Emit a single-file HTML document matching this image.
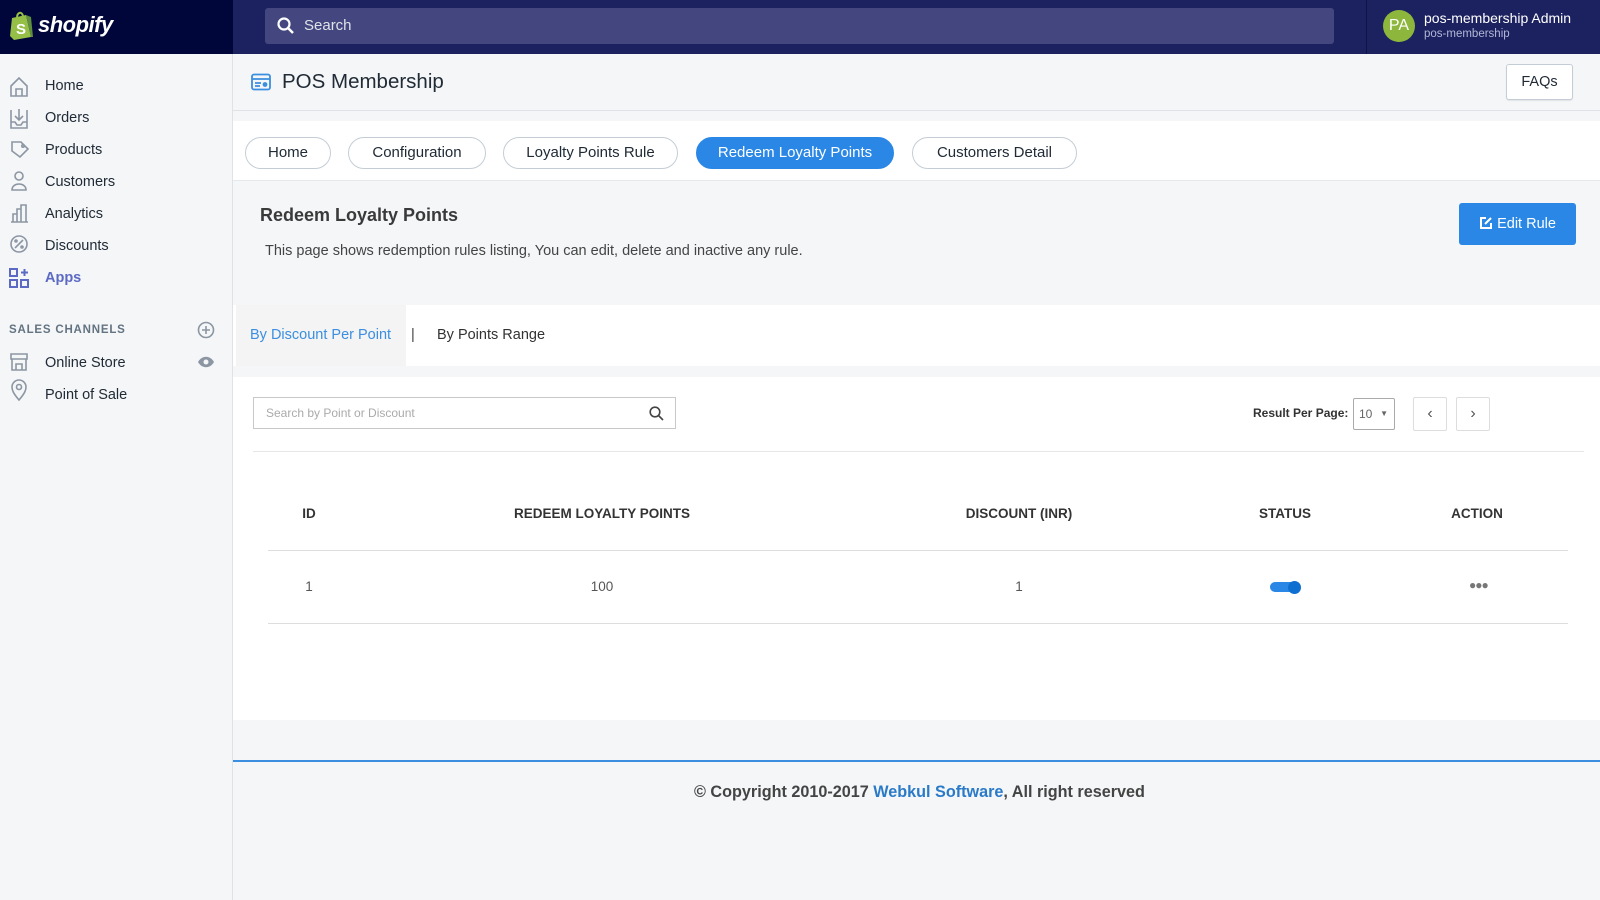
<!DOCTYPE html>
<html><head><meta charset="utf-8"><style>
*{box-sizing:border-box;margin:0;padding:0}
body{width:1600px;height:900px;overflow:hidden;background:#f4f6f8;font-family:"Liberation Sans",sans-serif;color:#212b36;position:relative}
.abs{position:absolute}
.top{left:0;top:0;width:1600px;height:54px;background:#1c2260}
.logo{left:0;top:0;width:233px;height:54px;background:#000639}
.search{left:265px;top:8px;width:1069px;height:36px;background:#43467f;border-radius:3px;color:#dfe3e8;font-size:15px;line-height:36px;padding-left:39px}
.side{left:0;top:54px;width:233px;height:846px;background:#f4f6f8;border-right:1px solid #dfe3e8}
.nav{left:45px;font-size:14.5px;color:#212b36}
.pill{top:137px;height:32px;border:1.5px solid #c4cdd5;border-radius:16px;font-size:15px;line-height:29px;text-align:center;color:#212b36;background:#fff}
.col{font-size:13.5px;font-weight:bold;color:#333;transform:translateX(-50%);white-space:nowrap}
.cell{font-size:13.5px;color:#555;transform:translateX(-50%)}
</style></head><body>
<div class="abs top"></div>
<div class="abs logo">
<svg class="abs" style="left:9px;top:10px" width="26" height="30" viewBox="0 0 26 30"><path d="M3 8 L17 5 L22 27 L5 30 L1 26 Z" fill="#95bf47"/><path d="M17 5 L22 7 L24 27 L22 27Z" fill="#5e8e3e"/><path d="M8 8 C8 2 13 1 14 6" stroke="#95bf47" stroke-width="2" fill="none"/><text x="7" y="24" fill="#fff" font-size="15" font-weight="bold" font-family="Liberation Sans">S</text></svg>
<div class="abs" style="left:38px;top:12px;color:#fff;font-size:22px;font-weight:bold;font-style:italic;letter-spacing:-0.5px">shopify</div>
</div>
<div class="abs search">Search</div>
<svg class="abs" style="left:277px;top:17px" width="18" height="18" viewBox="0 0 18 18"><circle cx="7" cy="7" r="5.5" stroke="#fff" stroke-width="2.2" fill="none"/><path d="M11 11 L16 16" stroke="#fff" stroke-width="2.5"/></svg>
<div class="abs" style="left:1366px;top:0;width:1px;height:54px;background:#0f1440"></div>
<div class="abs" style="left:1383px;top:10px;width:32px;height:32px;border-radius:50%;background:#8db63d;color:#fff;font-size:16px;line-height:32px;text-align:center">PA</div>
<div class="abs" style="left:1424px;top:10px;color:#fff;font-size:14px">pos-membership Admin</div>
<div class="abs" style="left:1424px;top:28px;color:#b3b8d6;font-size:11.5px">pos-membership</div>

<div class="abs side"></div>
<svg class="abs" style="left:9px;top:76px" width="22" height="330" viewBox="0 0 22 330" fill="none" stroke="#8c96a3" stroke-width="1.6">
<path d="M2 10 L10 2 L18 10 V20 H2 Z M7 20 V13 H13 V20"/>
<path d="M2 34 V52 H18 V34 M10 33 V44 M6 40 L10 44 L14 40 M2 46 H6 L8 49 H12 L14 46 H18"/>
<path d="M3 75 L3 66 L12 66 L19 73 L11 81 Z"/><circle cx="14" cy="70" r="1.2"/>
<circle cx="10" cy="100" r="4"/><path d="M3 114 C3 106 17 106 17 114 Z"/>
<path d="M2 146 H19 M4 146 V138 H8 V146 M8 146 V133 H12 V146 M12 146 V129 H17 V146"/>
<circle cx="10" cy="168" r="8"/><path d="M6 172 L14 164"/><circle cx="7" cy="165" r="1"/><circle cx="13" cy="171" r="1"/>
</svg>
<svg class="abs" style="left:9px;top:268px" width="22" height="22" viewBox="0 0 22 22" fill="none" stroke="#5c6ac4" stroke-width="2"><rect x="1" y="1" width="7" height="7"/><rect x="1" y="12" width="7" height="7"/><rect x="12" y="12" width="7" height="7"/><path d="M15.5 1 V8 M12 4.5 H19"/></svg>
<div class="abs nav" style="top:78px">Home</div>
<div class="abs nav" style="top:110px">Orders</div>
<div class="abs nav" style="top:142px">Products</div>
<div class="abs nav" style="top:174px">Customers</div>
<div class="abs nav" style="top:206px">Analytics</div>
<div class="abs nav" style="top:238px">Discounts</div>
<div class="abs nav" style="top:270px;color:#5c6ac4;font-weight:bold">Apps</div>
<div class="abs" style="left:9px;top:324px;font-size:11.5px;font-weight:bold;color:#637381;letter-spacing:0.8px">SALES CHANNELS</div>
<svg class="abs" style="left:197px;top:321px" width="18" height="18" viewBox="0 0 18 18" fill="none" stroke="#8c96a3" stroke-width="1.6"><circle cx="9" cy="9" r="7.5"/><path d="M9 5 V13 M5 9 H13"/></svg>
<svg class="abs" style="left:197px;top:355px" width="18" height="14" viewBox="0 0 18 14"><path d="M1 7 C5 0 13 0 17 7 C13 14 5 14 1 7Z" fill="#8c96a3"/><circle cx="9" cy="7" r="2.5" fill="#f4f6f8"/></svg>
<svg class="abs" style="left:9px;top:352px" width="22" height="50" viewBox="0 0 22 50" fill="none" stroke="#8c96a3" stroke-width="1.6"><path d="M2 2 H18 V7 H2 Z M3 7 V18 H17 V7 M7 18 V12 H13 V18"/><path d="M10 48 C4 41 3 38 3 35 A7 7 0 0 1 17 35 C17 38 16 41 10 48Z"/><circle cx="10" cy="35" r="2.5"/></svg>
<div class="abs nav" style="top:355px">Online Store</div>
<div class="abs nav" style="top:387px">Point of Sale</div>

<svg class="abs" style="left:251px;top:73px" width="20" height="18" viewBox="0 0 20 18" fill="none" stroke="#3b8ee0" stroke-width="1.8"><rect x="1" y="1.5" width="18" height="15" rx="2"/><path d="M1 6 H19 M4 10 H10 M4 13 H9" /><circle cx="14" cy="11.5" r="1.5" fill="#3b8ee0"/></svg>
<div class="abs" style="left:282px;top:70px;font-size:20.5px;color:#212b36">POS Membership</div>
<div class="abs" style="left:1506px;top:64px;width:67px;height:36px;background:#fff;border:1px solid #c4cdd5;border-radius:3px;font-size:14.5px;line-height:34px;text-align:center;box-shadow:0 1px 1px rgba(0,0,0,.08)">FAQs</div>
<div class="abs" style="left:233px;top:110px;width:1367px;height:1px;background:#dfe3e8"></div>

<div class="abs" style="left:233px;top:121px;width:1367px;height:60px;background:#fff;border-bottom:1px solid #e6e9ec"></div>
<div class="abs pill" style="left:245px;width:86px">Home</div>
<div class="abs pill" style="left:348px;width:138px">Configuration</div>
<div class="abs pill" style="left:503px;width:175px">Loyalty Points Rule</div>
<div class="abs pill" style="left:696px;width:198px;background:#2a87e6;border-color:#2a87e6;color:#fff">Redeem Loyalty Points</div>
<div class="abs pill" style="left:912px;width:165px">Customers Detail</div>

<div class="abs" style="left:260px;top:205px;font-size:18px;font-weight:bold;color:#3a3a3a">Redeem Loyalty Points</div>
<div class="abs" style="left:265px;top:243px;font-size:14.5px;color:#444">This page shows redemption rules listing, You can edit, delete and inactive any rule.</div>
<div class="abs" style="left:1459px;top:203px;width:117px;height:42px;background:#2a87e6;border-radius:3px;color:#fff;font-size:14.5px;line-height:42px;text-align:center">
<svg style="vertical-align:-2px" width="14" height="14" viewBox="0 0 14 14" fill="none" stroke="#fff" stroke-width="2"><path d="M7 2 H2 V12 H12 V7"/><path d="M6 8 L12 2"/></svg> Edit Rule</div>

<div class="abs" style="left:233px;top:305px;width:1367px;height:61px;background:#fff"></div>
<div class="abs" style="left:236px;top:305px;width:170px;height:61px;background:#f4f4f4"></div>
<div class="abs" style="left:250px;top:327px;font-size:14.5px;color:#3b8ee0">By Discount Per Point</div>
<div class="abs" style="left:411px;top:327px;font-size:14.5px;color:#444">|</div>
<div class="abs" style="left:437px;top:327px;font-size:14.5px;color:#333">By Points Range</div>

<div class="abs" style="left:233px;top:377px;width:1367px;height:343px;background:#fff"></div>
<div class="abs" style="left:253px;top:397px;width:423px;height:32px;border:1px solid #c8c8c8;font-size:12px;color:#aaa;line-height:30px;padding-left:12px">Search by Point or Discount</div>
<svg class="abs" style="left:649px;top:406px" width="15" height="15" viewBox="0 0 15 15" fill="none" stroke="#444" stroke-width="1.6"><circle cx="6" cy="6" r="4.8"/><path d="M9.5 9.5 L14 14"/></svg>
<div class="abs" style="left:1253px;top:406px;font-size:12px;font-weight:bold;color:#333">Result Per Page:</div>
<div class="abs" style="left:1353px;top:398px;width:42px;height:32px;border:1px solid #aaa;border-radius:2px;font-size:12px;color:#666;line-height:30px;padding-left:5px">10<span style="position:absolute;right:6px;font-size:8px">▼</span></div>
<div class="abs" style="left:1413px;top:397px;width:34px;height:34px;border:1px solid #ddd;border-radius:2px;color:#555;font-size:16px;line-height:32px;text-align:center">‹</div>
<div class="abs" style="left:1456px;top:397px;width:34px;height:34px;border:1px solid #ddd;border-radius:2px;color:#555;font-size:16px;line-height:32px;text-align:center">›</div>
<div class="abs" style="left:253px;top:451px;width:1331px;height:1px;background:#e6e6e6"></div>

<div class="abs col" style="left:309px;top:506px">ID</div>
<div class="abs col" style="left:602px;top:506px">REDEEM LOYALTY POINTS</div>
<div class="abs col" style="left:1019px;top:506px">DISCOUNT (INR)</div>
<div class="abs col" style="left:1285px;top:506px">STATUS</div>
<div class="abs col" style="left:1477px;top:506px">ACTION</div>
<div class="abs" style="left:268px;top:550px;width:1300px;height:1px;background:#ddd"></div>
<div class="abs cell" style="left:309px;top:579px">1</div>
<div class="abs cell" style="left:602px;top:579px">100</div>
<div class="abs cell" style="left:1019px;top:579px">1</div>
<div class="abs" style="left:1270px;top:582px;width:30px;height:10px;border-radius:5px;background:#2a87e6"></div>
<div class="abs" style="left:1288px;top:581px;width:13px;height:13px;border-radius:50%;background:#0f6fd0"></div>
<div class="abs" style="left:1469px;top:578px;font-size:12px;color:#777;letter-spacing:-1px">●●●</div>
<div class="abs" style="left:268px;top:623px;width:1300px;height:1px;background:#ddd"></div>

<div class="abs" style="left:233px;top:760px;width:1367px;height:1.5px;background:#3b8ee0"></div>
<div class="abs" style="left:694px;top:783px;font-size:16.2px;font-weight:bold;color:#444;white-space:nowrap">© Copyright 2010-2017 <span style="color:#2a7ac8">Webkul Software</span>, All right reserved</div>
</body></html>
